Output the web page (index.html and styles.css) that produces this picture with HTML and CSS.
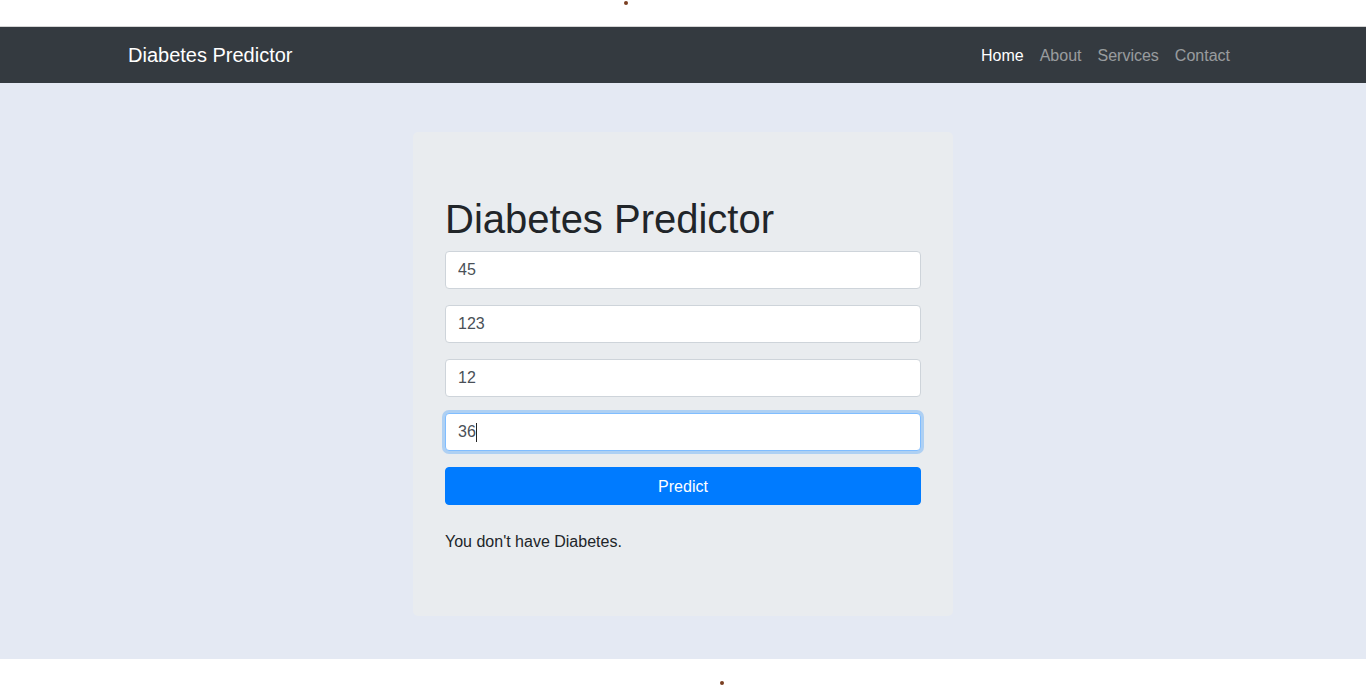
FILE: index.html
```html
<!DOCTYPE html>
<html lang="en">
<head>
<meta charset="utf-8">
<title>Diabetes Predictor</title>
<link rel="stylesheet" href="styles.css">
</head>
<body>
<div class="topstrip"><span class="dot dot-top"></span></div>
<nav class="navbar">
  <div class="container nav-inner">
    <a class="brand" href="#">Diabetes Predictor</a>
    <ul class="nav-links">
      <li><a class="nav-link active" href="#">Home</a></li>
      <li><a class="nav-link" href="#">About</a></li>
      <li><a class="nav-link" href="#">Services</a></li>
      <li><a class="nav-link" href="#">Contact</a></li>
    </ul>
  </div>
</nav>
<main class="main">
  <section class="card">
    <h1 class="title">Diabetes Predictor</h1>
    <form class="form">
      <input class="field" type="text" value="45">
      <input class="field" type="text" value="123">
      <input class="field" type="text" value="12">
      <div class="field-wrap">
        <input class="field focused" type="text" value="36">
        <span class="caret"></span>
      </div>
      <button class="btn" type="button">Predict</button>
    </form>
    <p class="result">You don't have Diabetes.</p>
  </section>
</main>
<footer class="bottomstrip"><span class="dot dot-bottom"></span></footer>
</body>
</html>
```
FILE: styles.css
```css
* { box-sizing: border-box; }
html, body { margin: 0; padding: 0; }
body {
  font-family: "Liberation Sans", Arial, sans-serif;
  font-size: 16px;
  line-height: 1.5;
  color: #212529;
  background: #fff;
  height: 685px;
  overflow: hidden;
}
.topstrip {
  position: relative;
  height: 27px;
  background: #fff;
  border-bottom: 1px solid #d4d4d4;
}
.dot {
  position: absolute;
  width: 4px;
  height: 4px;
  border-radius: 50%;
  background: #7a3f22;
}
.dot-top { left: 624px; top: 1px; }
.dot-bottom { left: 720px; top: 22px; }
.navbar {
  background: #343a40;
  padding: 9px 0 7px;
  height: 56px;
}
.container {
  width: 1140px;
  margin: 0 auto;
  padding: 0 15px;
}
.nav-inner {
  display: flex;
  align-items: center;
  justify-content: space-between;
}
.brand {
  color: #fff;
  text-decoration: none;
  font-size: 20px;
  line-height: 30px;
  padding: 4px 0 6px;
}
.nav-links {
  list-style: none;
  margin: 0;
  padding: 0;
  display: flex;
}
.nav-link {
  display: block;
  padding: 8px;
  color: rgba(255,255,255,.5);
  text-decoration: none;
  line-height: 24px;
}
.nav-link.active { color: #fff; }
.main {
  background: #e4e9f3;
  height: 576px;
  padding-top: 49px;
}
.card {
  width: 540px;
  margin: 0 auto;
  background: #e9ecef;
  border-radius: 5px;
  padding: 63px 32px 62px;
}
.title {
  margin: 0 0 8px;
  font-size: 40px;
  font-weight: 400;
  line-height: 1.2;
}
.form {
  display: flex;
  flex-direction: column;
  gap: 16px;
}
.field-wrap { position: relative; }
.field {
  display: block;
  width: 100%;
  height: 38px;
  padding: 6px 12px;
  font-family: inherit;
  font-size: 16px;
  line-height: 24px;
  color: #495057;
  background: #fff;
  border: 1px solid #ced4da;
  border-radius: 4px;
  outline: none;
}
.field.focused {
  border-color: #80bdff;
  box-shadow: 0 0 0 3px rgba(0,123,255,.25);
}
.caret {
  position: absolute;
  left: 31px;
  top: 10px;
  width: 1px;
  height: 19px;
  background: #222;
}
.btn {
  display: block;
  width: 100%;
  height: 38px;
  border: 1px solid #007bff;
  background: #007bff;
  color: #fff;
  font-family: inherit;
  font-size: 16px;
  line-height: 24px;
  border-radius: 4px;
  padding: 7px 12px 5px;
}
.result {
  margin: 25px 0 0;
}
.bottomstrip {
  position: relative;
  height: 26px;
  background: #fff;
}
```
